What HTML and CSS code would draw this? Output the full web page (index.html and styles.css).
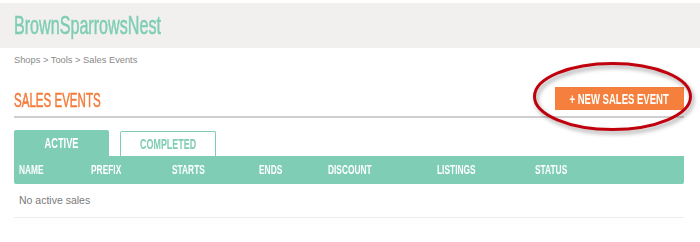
FILE: index.html
```html
<!DOCTYPE html>
<html lang="en">
<head>
<meta charset="utf-8">
<title>Sales Events</title>
<link rel="stylesheet" href="styles.css">
</head>
<body>
<header class="topbar">
  <span class="brand cond">BrownSparrowsNest</span>
</header>
<main class="page">
  <nav class="crumbs">Shops &gt; Tools &gt; Sales Events</nav>
  <div class="title-row">
    <h1 class="title"><span class="cond">SALES EVENTS</span></h1>
    <button class="new-btn"><span class="cond">+ NEW SALES EVENT</span></button>
  </div>
  <div class="tabs">
    <div class="tab tab-active"><span class="cond">ACTIVE</span></div>
    <div class="tab tab-idle"><span class="cond">COMPLETED</span></div>
  </div>
  <div class="thead">
    <div class="th"><span class="cond">NAME</span></div>
    <div class="th"><span class="cond">PREFIX</span></div>
    <div class="th"><span class="cond">STARTS</span></div>
    <div class="th"><span class="cond">ENDS</span></div>
    <div class="th"><span class="cond">DISCOUNT</span></div>
    <div class="th"><span class="cond">LISTINGS</span></div>
    <div class="th"><span class="cond">STATUS</span></div>
  </div>
  <div class="empty">No active sales</div>
</main>
<svg class="annot" width="170" height="80" viewBox="0 0 170 80" aria-hidden="true">
  <ellipse cx="82.5" cy="38.5" rx="78" ry="33" fill="none" stroke="#c0000c" stroke-width="3"/>
</svg>
</body>
</html>
```
FILE: styles.css
```css
* { box-sizing: border-box; }

html, body {
  margin: 0;
  padding: 0;
  background: #ffffff;
  font-family: "Liberation Sans", Arial, sans-serif;
}

body {
  position: relative;
  width: 700px;
  height: 242px;
  overflow: hidden;
}

.cond {
  display: inline-block;
  white-space: nowrap;
  transform-origin: left center;
}

.topbar {
  margin-top: 3px;
  height: 45px;
  background: #f1f0ee;
  padding-left: 14px;
  line-height: 45px;
}

.brand {
  font-size: 26px;
  color: #7ecdb4;
  -webkit-text-stroke: 0.5px #7ecdb4;
  transform: scaleX(0.62);
}

.page {
  padding: 0 16px 0 14px;
}

.crumbs {
  margin-top: 6px;
  height: 12px;
  line-height: 12px;
  font-size: 9.3px;
  color: #8a8a8a;
}

.title-row {
  display: flex;
  justify-content: space-between;
  align-items: flex-end;
  min-height: 52px;
  padding-bottom: 6px;
  border-bottom: 2px solid #cfcfcf;
}

.title {
  margin: 0;
  font-size: 21px;
  font-weight: normal;
  line-height: 20px;
  color: #f47b3a;
}

.title .cond {
  -webkit-text-stroke: 0.6px #f47b3a;
  transform: scaleX(0.55);
}

.new-btn {
  display: flex;
  justify-content: center;
  width: 129px;
  height: 23px;
  padding: 0;
  border: none;
  background: #f5803d;
  color: #ffffff;
  font-family: "Liberation Sans", Arial, sans-serif;
  font-size: 15px;
  font-weight: bold;
  line-height: 23px;
}

.new-btn .cond {
  transform-origin: center;
  transform: scaleX(0.635);
}

.tabs {
  display: flex;
  align-items: flex-end;
  gap: 11px;
  margin-top: 12px;
  height: 26px;
}

.tab {
  display: flex;
  justify-content: center;
  font-size: 15px;
  font-weight: bold;
}

.tab .cond {
  transform-origin: center;
}

.tab-active {
  width: 95px;
  height: 26px;
  line-height: 26px;
  background: #7ecdb4;
  color: #ffffff;
  border-radius: 2px 2px 0 0;
}

.tab-active .cond { transform: scaleX(0.62); }

.tab-idle {
  width: 96px;
  height: 25px;
  line-height: 24px;
  background: #ffffff;
  color: #7ecdb4;
  border: 1px solid #7ecdb4;
  border-bottom: none;
  border-radius: 2px 2px 0 0;
}

.tab-idle .cond { transform: scaleX(0.595); }

.thead {
  display: grid;
  grid-template-columns: 72px 81px 87px 69px 109px 98px 1fr;
  height: 28px;
  padding-left: 5px;
  background: #7ecdb4;
  border-radius: 0 0 2px 2px;
  color: #ffffff;
  font-size: 13.5px;
  font-weight: bold;
  line-height: 28px;
}

.th .cond { transform: scaleX(0.62); }

.empty {
  height: 34px;
  padding-left: 5px;
  line-height: 33px;
  font-size: 10.5px;
  color: #7a7a7a;
  border-bottom: 1px solid #ececec;
}

.annot {
  position: absolute;
  left: 530px;
  top: 58px;
  overflow: visible;
  filter: drop-shadow(2px 3px 2px rgba(0, 0, 0, 0.35));
}
```
